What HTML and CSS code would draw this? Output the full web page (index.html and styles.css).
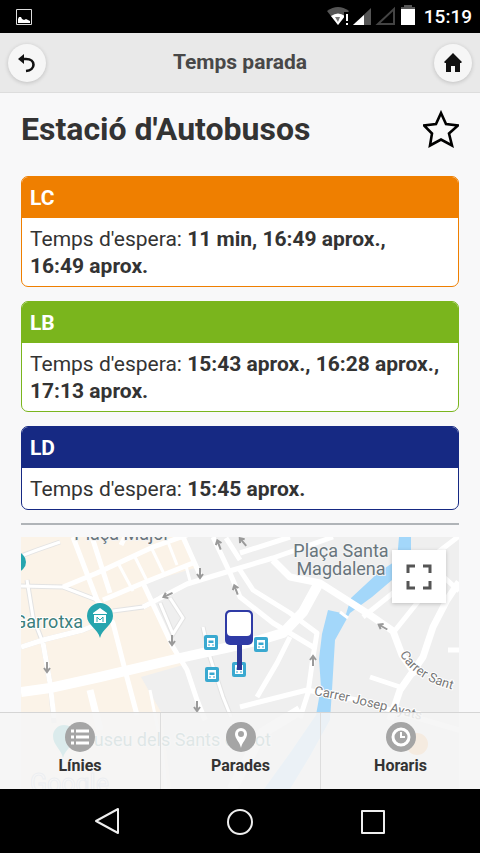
FILE: index.html
```html
<!DOCTYPE html>
<html lang="ca">
<head>
<meta charset="utf-8">
<meta name="viewport" content="width=device-width, initial-scale=1">
<title>Temps parada</title>
<link rel="stylesheet" href="styles.css">
</head>
<body>
<div class="status">
  <svg width="16" height="16" viewBox="0 0 16 16" aria-hidden="true"><path d="M.5.5h15v15H.5z" fill="none" stroke="#ddd"/><path d="M2 14v-4l1-2 2 0 1 2 2 1 2-1 2 1 2 1v2z" fill="#fff"/></svg>
  <div class="status-right">
    <svg width="92" height="24" viewBox="0 0 92 24" aria-hidden="true">
      <path d="M1 6Q12-2 23 6L12 20z" fill="#555"/><path d="M5 11q7-5 14 0L12 20z" fill="#fff"/><path d="M9 12h5l-2 5z" fill="#777"/><path d="M18 7h6v15h-6z" fill="#000"/><path d="M20 9h2v7h-2zM20 18h2v2h-2z" fill="#fff"/>
      <path d="M45 3v17H27z" fill="#555"/><path d="M38 10v10H27z" fill="#fff"/>
      <path d="M68 4v15H52z" fill="none" stroke="#444" stroke-width="2"/>
      <path d="M78 0h8v2h3v4H75V2h3z" fill="#555"/><path d="M75 4h14v16H75z" fill="#fff"/>
    </svg>
    <span>15:19</span>
  </div>
</div>
<header class="bar">
  <button class="round" aria-label="Enrere"><svg width="20" height="20" viewBox="0 0 20 20"><path d="M5 6h4c10 0 10 11 0 12" fill="none" stroke="#111" stroke-width="2.6"/><path d="M7 1v10L1 6z" fill="#111"/></svg></button>
  <h1>Temps parada</h1>
  <button class="round" aria-label="Inici"><svg width="20" height="20" viewBox="0 0 20 20"><path d="M10 0l9 9-1 1h-1v9h-5v-6H8v6H3v-9H2L1 9z" fill="#111"/></svg></button>
</header>
<main>
  <div class="title">
    <h2>Estació d'Autobusos</h2>
    <button class="star" aria-label="Favorit"><svg width="36" height="38" viewBox="0 0 36 38"><path d="M18 3l5 11 12 1.500-9 8 3 12-11-6-11 6 2-12-8-8L13 14z" fill="none" stroke="#000" stroke-width="2.600"/></svg></button>
  </div>
  <section class="cards">
    <article class="card orange"><h3>LC</h3><p>Temps d'espera: <b>11&nbsp;min, 16:49&nbsp;aprox., 16:49&nbsp;aprox.</b></p></article>
    <article class="card green"><h3>LB</h3><p>Temps d'espera: <b>15:43&nbsp;aprox., 16:28&nbsp;aprox., 17:13&nbsp;aprox.</b></p></article>
    <article class="card blue"><h3>LD</h3><p>Temps d'espera: <b>15:45&nbsp;aprox.</b></p></article>
  </section>
  <hr>
  <div class="map">
    <svg class="map-art" viewBox="21 537 438 252" preserveAspectRatio="xMidYMin slice" role="img" aria-label="Mapa">
      <defs>
        <g id="bus"><rect width="14" height="15" rx="2" fill="#3aa9d0"/><path d="M3 3h8v9H3z" fill="#fff"/><path d="M4.500 5.500h5v2.500h-5z" fill="#3aa9d0"/><path d="M4 10h2M8 10h2" stroke="#3aa9d0"/></g>
        <path id="arrow" d="M0-5V5M-3 1L0 5 3 1" fill="none" stroke="#9a9a9a" stroke-width="2"/>
        <path id="sant" d="M400 654Q412 680 458 691"/>
        <path id="josep" d="M314 695Q355 702 459 730"/>
      </defs>
      <path d="M21 537h438v252H21z" fill="#efefef"/>
      <path d="M21 537h165l12 30-53 16 38 82-42 12 20 35 10 77H21z" fill="#fbf3e8"/>
      <path d="M399 537h12v20l-6 12-33 28-22 16-15 27-3 50-2 30-20 36-20 33h-26l26-36 26-38 5-28-2-28 3-25 6-24 18 4 5-16 28-26 18-12z" fill="#a3d7fa"/>
      <g class="casing" fill="none" stroke="#e3e3e3">
        <path d="M21 556l16-6 23-8M27 580l6 37 10 26 7 40 4 40M21 586l42 1 34 13M21 647l22-7 40-10 20-8M113 611l30-4 17-9M160 603l13 31 10-16-13-20M203 627l7 30 13 40 8 20"/>
      </g>
      <g fill="none" stroke="#fff" stroke-linejoin="round">
        <g stroke-width="3">
          <path d="M21 556l16-6 23-8M21 586l42 1 34 13M113 611l30-4 17-9M160 603l13 31 10-16-13-20M27 580l6 37 10 26M118 563l15 28M135 557l13 26M152 549l12 25M168 542l9 23M186 566l4 15M203 627l7 30 13 40 8 20M150 690l12 60 4 39"/>
        </g>
        <g stroke-width="5">
          <path d="M63 587l34-14 56-26 34-12M103 600l40-17 50-20M92 537l18 56M73 537l24 63 16 23 12 47 12 45M43 643l7 40 4 35M21 647l22-7 40-10 20-8M143 583l30 64 14 23 10 30 8 20M183 537l17 38M213 537l17 36 10 24 33 26 40 24M143 607l44-23 46-14 40-12 60-21M240 570l13 20 37 23 27 20-4 24-5 36-8 25M290 637l-13 26-20 34M240 707l67-17 50 10 102 30M363 617l30-24 20-15M393 633l24-30 13-17M448 650h11M370 677l30 10M437 553l22-17M437 571l22 20M240 560l-14-22M240 553l50-16M125 537l-4 8"/>
        </g>
        <g stroke-width="7"><path d="M273 560l17 17 30 6 47 30 26 18 9 24 14 20M459 582l-12 18-14 27-10 30-23 33-10 30M90 690l10 40"/></g>
        <path stroke-width="10" d="M21 692l29-4 50-11 80-19 50-11 30-7 23-7 20-21 17-31M300 710l-38 23-30 56"/>
        <path stroke-width="3" d="M340 612l8 6"/>
      </g>
      <use href="#arrow" x="200" y="573"/><use href="#arrow" x="172" y="640"/><use href="#arrow" x="47" y="667"/><use href="#arrow" x="197" y="706"/>
      <use href="#arrow" transform="translate(168 595)rotate(65)"/><use href="#arrow" transform="translate(219 545)rotate(160)"/><use href="#arrow" transform="translate(236 590)rotate(160)"/><use href="#arrow" transform="translate(313 661)rotate(180)"/><use href="#arrow" transform="translate(383 627)rotate(120)"/><use href="#arrow" transform="translate(243 542)rotate(140)"/>
      <circle cx="16" cy="562" r="10" fill="#26a5ae"/>
      <g class="place">
        <text x="122" y="540" text-anchor="middle">Plaça Major</text>
        <text x="341" y="557" text-anchor="middle">Plaça Santa</text>
        <text x="341" y="575" text-anchor="middle">Magdalena</text>
      </g>
      <g class="poi"><text x="83" y="628" text-anchor="end">Garrotxa</text><text x="78" y="746">Museu dels Sants d'Olot</text></g>
      <path d="M100 638c-2-9-13-13-13-22a13 13 0 0 1 26 0c0 9-11 13-13 22z" fill="#26a5ae"/>
      <path d="M100 608l7 5v1H93v-1zM94 615h12v8H94z" fill="#fff"/><path d="M97 622v-5l3 3 3-3v5" fill="none" stroke="#26a5ae"/>
      <path d="M63 758c-2-9-10-13-10-22a11 11 0 0 1 22 0c0 9-10 13-12 22z" fill="#26a5ae"/>
      <circle cx="417" cy="744" r="11" fill="#f5a14d"/>
      <g class="street"><text><textPath href="#sant">Carrer Sant</textPath></text><text><textPath href="#josep">Carrer Josep Ayats</textPath></text></g>
      <use href="#bus" x="204" y="635"/><use href="#bus" x="205" y="667"/><use href="#bus" x="254" y="637"/><use href="#bus" x="232" y="662"/>
      <path d="M237 640h5v30h-5z" fill="#2d3795"/><rect x="225" y="610" width="28" height="35" rx="5" fill="#2f3ba6"/><rect x="227" y="612" width="24" height="24" rx="4" fill="#fff"/>
      <text class="google" x="30" y="792">Google</text>
    </svg>
    <button class="full" aria-label="Pantalla completa"><svg width="26" height="26" viewBox="0 0 26 26"><path d="M2 9V2h7M17 2h7v7M24 17v7h-7M9 24H2v-7" fill="none" stroke="#555" stroke-width="3"/></svg></button>
  </div>
  <nav class="tabs">
    <a href="#linies"><svg width="30" height="30" viewBox="0 0 30 30"><circle cx="15" cy="15" r="15" fill="#a5a5a5"/><path d="M11 9h13M11 15h13M11 21h13M6 9h3M6 15h3M6 21h3" stroke="#fff" stroke-width="3"/></svg>Línies</a>
    <a href="#parades"><svg width="30" height="30" viewBox="0 0 30 30"><circle cx="15" cy="15" r="15" fill="#a5a5a5"/><path fill-rule="evenodd" d="M15 26c-1-6-6-9-6-14a6 6 0 0 1 12 0c0 5-5 8-6 14zM15 9a3 3 0 1 0 0 6 3 3 0 0 0 0-6z" fill="#fff"/></svg>Parades</a>
    <a href="#horaris"><svg width="30" height="30" viewBox="0 0 30 30"><circle cx="15" cy="15" r="15" fill="#a5a5a5"/><circle cx="15" cy="15" r="8" fill="none" stroke="#fff" stroke-width="3"/><path d="M15 10v5h4" fill="none" stroke="#fff" stroke-width="2"/></svg>Horaris</a>
  </nav>
</main>
<div class="system">
  <button aria-label="Enrere"><svg width="28" height="30" viewBox="0 0 28 30"><path d="M25 3v24L3 15z"/></svg></button>
  <button aria-label="Inici"><svg width="28" height="30" viewBox="0 0 28 30"><circle cx="14" cy="16" r="12"/></svg></button>
  <button aria-label="Recents"><svg width="28" height="30" viewBox="0 0 28 30"><path d="M3 5h22v22H3z"/></svg></button>
</div>
</body>
</html>
```
FILE: styles.css
```css
* { box-sizing: border-box; }
body {
  margin: 0;
  min-height: 100vh;
  display: flex;
  flex-direction: column;
  background: #f8f8f9;
  color: #333;
  font: 21px/27px Roboto, "Liberation Sans", sans-serif;
}
h1, h2, h3, p { margin: 0; }
button { border: 0; padding: 0; background: none; }
svg { display: block; }
.status {
  height: 33px;
  padding: 0 8px 0 16px;
  display: flex;
  align-items: center;
  justify-content: space-between;
  background: #000;
  color: #fff;
  font-size: 19px;
  font-weight: 500;
}
.status-right { display: flex; align-items: center; gap: 6px; }
.bar {
  height: 60px;
  padding: 0 8px;
  display: flex;
  align-items: center;
  justify-content: space-between;
  background: #e9e9e9;
  border-bottom: 1px solid #ddd;
}
.bar h1 { font-size: 21px; font-weight: 700; color: #484848; }
.round {
  width: 38px;
  height: 38px;
  display: grid;
  place-items: center;
  border-radius: 50%;
  background: #f6f6f6;
  box-shadow: 0 1px 4px rgba(0, 0, 0, .18);
}
main {
  flex: 1;
  position: relative;
  display: flex;
  flex-direction: column;
  padding: 16px 21px 0;
}
.title { height: 40px; display: flex; align-items: center; justify-content: space-between; }
.title h2 { font-size: 32px; line-height: 40px; }
.cards { margin-top: 27px; display: flex; flex-direction: column; gap: 14px; }
.card { border: 1px solid var(--line); border-radius: 7px; background: #fff; overflow: hidden; }
.card h3 { padding: 8px 8px 6px; font-size: 21px; color: #fff; background: var(--line); }
.card p { padding: 8px 8px 6px; }
.orange { --line: #ef7f00; }
.green { --line: #7ab51d; }
.blue { --line: #162983; }
hr { width: 100%; margin: 13px 0 12px; border: 0; border-top: 2px solid #b0b4b8; }
.map { flex: 1; min-height: 252px; position: relative; overflow: hidden; }
.map-art { width: 100%; height: 252px; }
.casing { stroke-width: 5px; }
.place { font-size: 18px; fill: #68757c; stroke: #f4f4f4; stroke-width: 2px; paint-order: stroke; }
.poi { font-size: 18px; fill: #3c7f7d; stroke: #fff; stroke-width: 2px; paint-order: stroke; }
.street { font-size: 13px; fill: #777; stroke: #fff; stroke-width: 2px; paint-order: stroke; }
.google { font-size: 25px; fill: #fff; stroke: #a9b8d0; stroke-width: 1px; }
.full {
  position: absolute;
  top: 13px;
  right: 13px;
  width: 54px;
  height: 53px;
  display: grid;
  place-items: center;
  background: #fff;
  box-shadow: 0 1px 4px rgba(0, 0, 0, .2);
}
.tabs {
  position: absolute;
  left: 0;
  right: 0;
  bottom: 0;
  height: 77px;
  display: grid;
  grid-template-columns: repeat(3, 1fr);
  background: rgba(245, 245, 245, .88);
  border-top: 1px solid #d5d5d5;
}
.tabs a {
  display: flex;
  flex-direction: column;
  align-items: center;
  padding-top: 9px;
  color: #333;
  font-size: 16px;
  font-weight: 700;
  text-decoration: none;
}
.tabs a + a { border-left: 1px solid #ddd; }
.system {
  height: 64px;
  padding: 0 40px;
  display: grid;
  grid-template-columns: repeat(3, 1fr);
  place-items: center;
  background: #000;
}
.system svg { fill: none; stroke: #eee; stroke-width: 2px; stroke-linejoin: round; }
```
